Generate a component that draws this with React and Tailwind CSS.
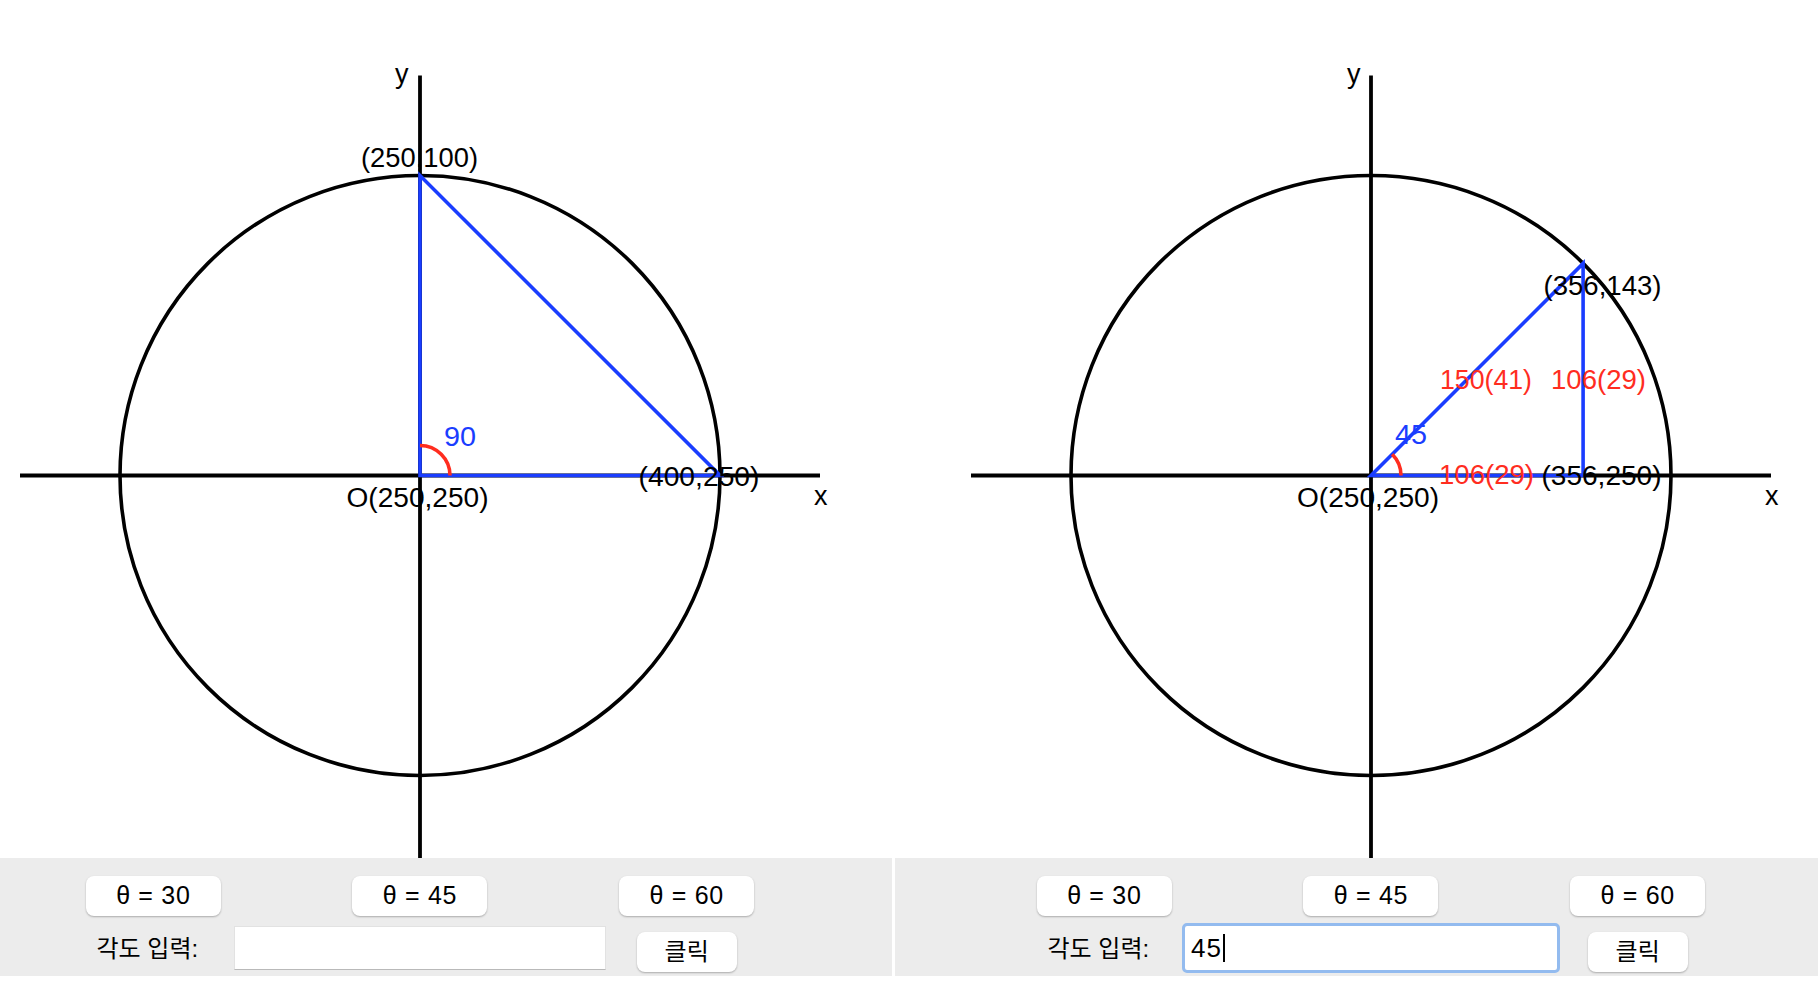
const BLUE = '#1a3dff'
const RED = '#ff2d1f'
const OY = 475.5

const leftLabels = [
  { t: 'y', dx: -25, y: 83 },
  { t: '(250,100)', dx: -59, y: 167, len: 117 },
  { t: '90', dx: 24, y: 446, len: 32, color: BLUE },
  { t: 'O(250,250)', dx: -73.5, y: 507, len: 142 },
  { t: '(400,250)', dx: 218.5, y: 486, len: 121 },
  { t: 'x', dx: 394, y: 505 },
]

const rightLabels = [
  { t: 'y', dx: -24, y: 83 },
  { t: '(356,143)', dx: 172.5, y: 295, len: 118 },
  { t: '150(41)', dx: 69, y: 389, len: 92, color: RED },
  { t: '106(29)', dx: 180, y: 389, len: 95, color: RED },
  { t: '45', dx: 24, y: 444, len: 32, color: BLUE },
  { t: '106(29)', dx: 68, y: 484, len: 95, color: RED },
  { t: '(356,250)', dx: 170.5, y: 485, len: 120 },
  { t: 'O(250,250)', dx: -74, y: 507, len: 142 },
  { t: 'x', dx: 394, y: 505 },
]

function Plot({ width, ox, points, arcEnd, labels }) {
  // points are offsets from the origin, in pixels
  const tri =
    `M ${ox} ${OY} ` + points.map(([x, y]) => `L ${ox + x} ${OY + y}`).join(' ') + ' Z'

  return (
    <svg width={width} height="858" className="block shrink-0">
      <line x1={ox - 400} y1={OY} x2={ox + 400} y2={OY} stroke="#000" strokeWidth="3.8" />
      <line x1={ox} y1={OY - 400} x2={ox} y2={OY + 400} stroke="#000" strokeWidth="3.8" />
      <circle cx={ox} cy={OY} r="300" fill="none" stroke="#000" strokeWidth="3.6" />
      <path d={tri} fill="none" stroke={BLUE} strokeWidth="3.6" />
      <path
        d={`M ${ox + 30} ${OY} A 30 30 0 0 0 ${ox + arcEnd[0]} ${OY + arcEnd[1]}`}
        fill="none"
        stroke={RED}
        strokeWidth="3.6"
      />
      {labels.map((l, i) => (
        <text
          key={i}
          x={ox + l.dx}
          y={l.y}
          fill={l.color || '#000'}
          fontSize="27"
          fontFamily="'Liberation Sans', Arial, sans-serif"
          textLength={l.len}
          lengthAdjust={l.len ? 'spacingAndGlyphs' : undefined}
        >
          {l.t}
        </text>
      ))}
    </svg>
  )
}

function ThetaButton({ children }) {
  return (
    <button className="h-[40px] w-[135px] shrink-0 rounded-[8px] bg-white text-[25px] tracking-[0.7px] text-black shadow-[0_1px_2px_rgba(0,0,0,0.28)]">
      {children}
    </button>
  )
}

function Controls({ offset, value }) {
  return (
    <div className="h-[118px] bg-[#ececec] pt-[18px]">
      <div className={`grid w-[800px] grid-cols-3 ${offset}`}>
        <div className="flex justify-center">
          <ThetaButton>θ = 30</ThetaButton>
        </div>
        <div className="flex justify-center">
          <ThetaButton>θ = 45</ThetaButton>
        </div>
        <div className="flex justify-center">
          <ThetaButton>θ = 60</ThetaButton>
        </div>

        <div className="mt-[10px] flex items-center justify-center text-[24px] text-black">
          <span className="mr-[12px]">각도 입력:</span>
        </div>
        <div className="mt-[10px] flex justify-center">
          {value ? (
            <div className="flex h-[44px] w-[372px] shrink-0 items-center rounded-[2px] bg-white pl-[6px] text-[26px] text-black outline-[3px] outline-[#93bbef] outline-solid">
              <span className="tracking-[1px]">{value}</span>
              <span className="ml-[1px] h-[28px] w-[2px] bg-black" />
            </div>
          ) : (
            <input
              type="text"
              className="h-[44px] w-[372px] shrink-0 border border-[#e2e2e2] border-b-[#b9b9b9] bg-white px-[6px] text-[26px] outline-none"
            />
          )}
        </div>
        <div className="mt-[16px] flex justify-center">
          <button className="h-[40px] w-[100px] shrink-0 rounded-[8px] bg-white text-[24px] text-black shadow-[0_1px_2px_rgba(0,0,0,0.28)]">
            클릭
          </button>
        </div>
      </div>
    </div>
  )
}

export default function App() {
  return (
    <div
      className="flex h-[982px] w-[1818px] gap-[3px] overflow-hidden bg-white"
      style={{ fontFamily: "'Liberation Sans', 'Noto Sans CJK KR', sans-serif" }}
    >
      <div className="flex w-[892px] flex-col">
        <Plot
          width={892}
          ox={420}
          points={[[0, -300], [300, 0]]}
          arcEnd={[0, -30]}
          labels={leftLabels}
        />
        <Controls offset="ml-[20px]" />
      </div>
      <div className="flex w-[923px] flex-col">
        <Plot
          width={923}
          ox={476}
          points={[[212.1, -212.1], [212.1, 0]]}
          arcEnd={[21.2, -21.2]}
          labels={rightLabels}
        />
        <Controls offset="ml-[76px]" value="45" />
      </div>
    </div>
  )
}
